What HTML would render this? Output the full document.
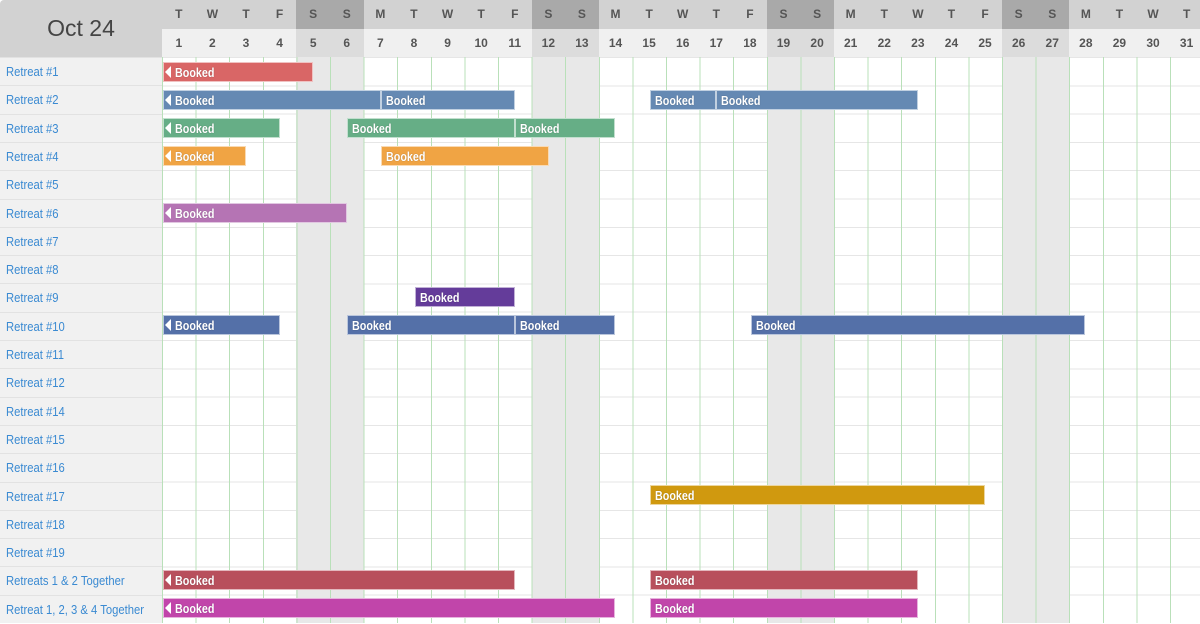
<!DOCTYPE html>
<html><head><meta charset="utf-8"><style>
*{margin:0;padding:0;box-sizing:border-box}
body{width:1200px;height:623px;overflow:hidden;background:#fff;font-family:"Liberation Sans",Arial,sans-serif;position:relative}
.n{display:inline-block;transform:scaleX(.9);transform-origin:left center;white-space:nowrap}
.corner{position:absolute;left:0;top:0;width:162px;height:57px;background:#d2d2d2;font-size:23px;color:#444;display:flex;align-items:center;justify-content:center;border-radius:4px 0 0 0}
.hdr{position:absolute;left:162px;display:flex}
.hdr div{width:33.6px;flex:none;text-align:center;font-size:12px;font-weight:bold;color:#555}
.h1{top:0;height:29px;background:#d2d2d2}
.h1 div{line-height:29px}
.h1 .we{background:#a9a9a9}
.h2{top:29px;height:28px;background:#f0f0f0}
.h2 div{line-height:28px}
.h2 .we{background:#dcdcdc}
.left{position:absolute;left:0;top:57px;width:162px;height:566px;background:#f1f1f1}
.lab{position:absolute;left:0;width:162px;height:28.3px;line-height:28px;padding-left:6px;font-size:12.5px;color:#3a8ad2;border-top:1px solid #e2e2e2}
.grid{position:absolute;left:162px;top:57px;width:1038px;height:566px;
background:repeating-linear-gradient(to bottom,#e6e6e6 0,#e6e6e6 1px,transparent 1px,transparent 28.3px)}
.we-col{position:absolute;top:57px;height:566px;width:33.6px;background:#e8e8e8}
.vl{position:absolute;left:162px;top:57px;width:1038px;height:566px;
background:repeating-linear-gradient(to right,#b9e0b9 0,#b9e0b9 1px,transparent 1px,transparent 33.6px)}
.bar{position:absolute;height:20px;color:#fff;font-size:12.5px;line-height:20px;padding-left:4px;border:1px solid rgba(255,255,255,.6);text-shadow:0 0 1px rgba(0,0,0,.4);overflow:hidden}
.bar span{display:inline-block;transform:scaleX(.86);transform-origin:left center;font-weight:bold}
.bar.a{padding-left:11px}
.bar.a:before{content:"";position:absolute;left:1px;top:3px;border-right:6px solid #fff;border-top:6px solid transparent;border-bottom:6px solid transparent}
</style></head><body>
<div class="corner">Oct 24</div>
<div class="hdr h1">
<div>T</div><div>W</div><div>T</div><div>F</div><div class="we">S</div><div class="we">S</div><div>M</div><div>T</div><div>W</div><div>T</div><div>F</div><div class="we">S</div><div class="we">S</div><div>M</div><div>T</div><div>W</div><div>T</div><div>F</div><div class="we">S</div><div class="we">S</div><div>M</div><div>T</div><div>W</div><div>T</div><div>F</div><div class="we">S</div><div class="we">S</div><div>M</div><div>T</div><div>W</div><div>T</div>
</div>
<div class="hdr h2">
<div>1</div><div>2</div><div>3</div><div>4</div><div class="we">5</div><div class="we">6</div><div>7</div><div>8</div><div>9</div><div>10</div><div>11</div><div class="we">12</div><div class="we">13</div><div>14</div><div>15</div><div>16</div><div>17</div><div>18</div><div class="we">19</div><div class="we">20</div><div>21</div><div>22</div><div>23</div><div>24</div><div>25</div><div class="we">26</div><div class="we">27</div><div>28</div><div>29</div><div>30</div><div>31</div>
</div>
<div class="left">
<div class="lab" style="top:0"><span class="n">Retreat #1</span></div>
<div class="lab" style="top:28.3px"><span class="n">Retreat #2</span></div>
<div class="lab" style="top:56.6px"><span class="n">Retreat #3</span></div>
<div class="lab" style="top:84.9px"><span class="n">Retreat #4</span></div>
<div class="lab" style="top:113.2px"><span class="n">Retreat #5</span></div>
<div class="lab" style="top:141.5px"><span class="n">Retreat #6</span></div>
<div class="lab" style="top:169.8px"><span class="n">Retreat #7</span></div>
<div class="lab" style="top:198.1px"><span class="n">Retreat #8</span></div>
<div class="lab" style="top:226.4px"><span class="n">Retreat #9</span></div>
<div class="lab" style="top:254.7px"><span class="n">Retreat #10</span></div>
<div class="lab" style="top:283px"><span class="n">Retreat #11</span></div>
<div class="lab" style="top:311.3px"><span class="n">Retreat #12</span></div>
<div class="lab" style="top:339.6px"><span class="n">Retreat #14</span></div>
<div class="lab" style="top:367.9px"><span class="n">Retreat #15</span></div>
<div class="lab" style="top:396.2px"><span class="n">Retreat #16</span></div>
<div class="lab" style="top:424.5px"><span class="n">Retreat #17</span></div>
<div class="lab" style="top:452.8px"><span class="n">Retreat #18</span></div>
<div class="lab" style="top:481.1px"><span class="n">Retreat #19</span></div>
<div class="lab" style="top:509.4px"><span class="n">Retreats 1 &amp; 2 Together</span></div>
<div class="lab" style="top:537.7px"><span class="n">Retreat 1, 2, 3 &amp; 4 Together</span></div>
</div>
<div class="grid"></div>
<div class="we-col" style="left:296.4px"></div><div class="we-col" style="left:330px"></div>
<div class="we-col" style="left:531.6px"></div><div class="we-col" style="left:565.2px"></div>
<div class="we-col" style="left:766.8px"></div><div class="we-col" style="left:800.4px"></div>
<div class="we-col" style="left:1002px"></div><div class="we-col" style="left:1035.6px"></div>
<div class="vl"></div>

<div class="bar a" style="top:62px;left:163px;width:150px;background:#d96666"><span>Booked</span></div>

<div class="bar a" style="top:90px;left:163px;width:218px;background:#6589b3"><span>Booked</span></div>
<div class="bar" style="top:90px;left:381px;width:134px;background:#6589b3"><span>Booked</span></div>
<div class="bar" style="top:90px;left:650px;width:66px;background:#6589b3"><span>Booked</span></div>
<div class="bar" style="top:90px;left:716px;width:202px;background:#6589b3"><span>Booked</span></div>

<div class="bar a" style="top:118px;left:163px;width:117px;background:#66ae86"><span>Booked</span></div>
<div class="bar" style="top:118px;left:347px;width:168px;background:#66ae86"><span>Booked</span></div>
<div class="bar" style="top:118px;left:515px;width:100px;background:#66ae86"><span>Booked</span></div>

<div class="bar a" style="top:146px;left:163px;width:83px;background:#f0a444"><span>Booked</span></div>
<div class="bar" style="top:146px;left:381px;width:168px;background:#f0a444"><span>Booked</span></div>

<div class="bar a" style="top:203px;left:163px;width:184px;background:#b574b4"><span>Booked</span></div>

<div class="bar" style="top:287px;left:415px;width:100px;background:#643c9a"><span>Booked</span></div>

<div class="bar a" style="top:315px;left:163px;width:117px;background:#5470a8"><span>Booked</span></div>
<div class="bar" style="top:315px;left:347px;width:168px;background:#5470a8"><span>Booked</span></div>
<div class="bar" style="top:315px;left:515px;width:100px;background:#5470a8"><span>Booked</span></div>
<div class="bar" style="top:315px;left:751px;width:334px;background:#5470a8"><span>Booked</span></div>

<div class="bar" style="top:485px;left:650px;width:335px;background:#d0990f"><span>Booked</span></div>

<div class="bar a" style="top:570px;left:163px;width:352px;background:#b84f5c"><span>Booked</span></div>
<div class="bar" style="top:570px;left:650px;width:268px;background:#b84f5c"><span>Booked</span></div>

<div class="bar a" style="top:598px;left:163px;width:452px;background:#c145aa"><span>Booked</span></div>
<div class="bar" style="top:598px;left:650px;width:268px;background:#c145aa"><span>Booked</span></div>
</body></html>
